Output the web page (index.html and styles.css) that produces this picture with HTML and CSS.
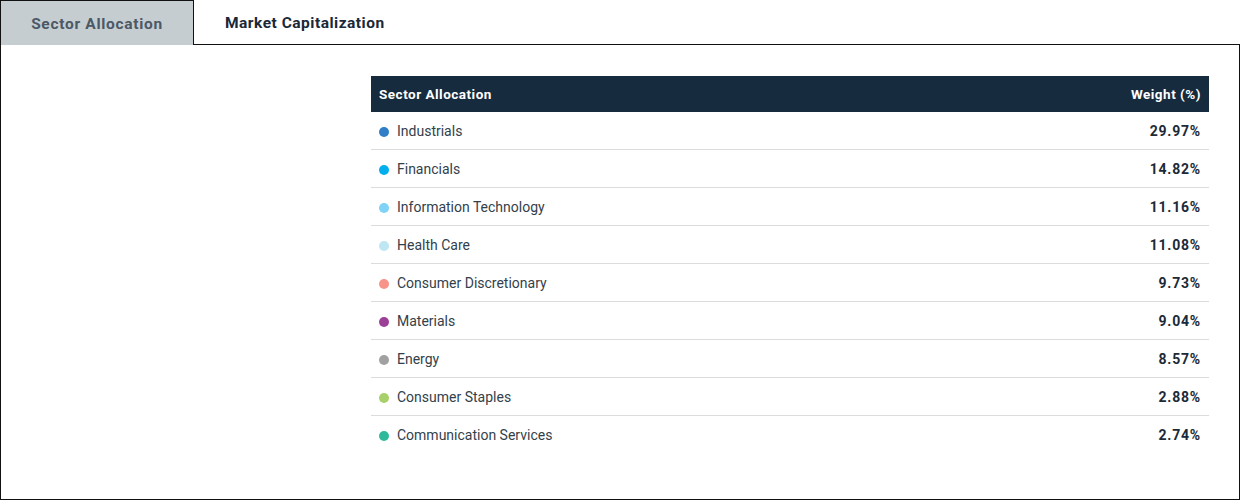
FILE: index.html
```html
<!DOCTYPE html>
<html>
<head>
<meta charset="utf-8">
<link rel="stylesheet" href="styles.css">
</head>
<body>
<div class="tabs">
  <div class="tab active">Sector Allocation</div>
  <div class="tab">Market Capitalization</div>
</div>
<div class="panel">
  <table class="alloc">
    <thead>
      <tr><th class="name">Sector Allocation</th><th class="val">Weight (%)</th></tr>
    </thead>
    <tbody>
      <tr><td class="name"><span class="dot c1"></span>Industrials</td><td class="val">29.97%</td></tr>
      <tr><td class="name"><span class="dot c2"></span>Financials</td><td class="val">14.82%</td></tr>
      <tr><td class="name"><span class="dot c3"></span>Information Technology</td><td class="val">11.16%</td></tr>
      <tr><td class="name"><span class="dot c4"></span>Health Care</td><td class="val">11.08%</td></tr>
      <tr><td class="name"><span class="dot c5"></span>Consumer Discretionary</td><td class="val">9.73%</td></tr>
      <tr><td class="name"><span class="dot c6"></span>Materials</td><td class="val">9.04%</td></tr>
      <tr><td class="name"><span class="dot c7"></span>Energy</td><td class="val">8.57%</td></tr>
      <tr><td class="name"><span class="dot c8"></span>Consumer Staples</td><td class="val">2.88%</td></tr>
      <tr><td class="name"><span class="dot c9"></span>Communication Services</td><td class="val">2.74%</td></tr>
    </tbody>
  </table>
</div>
</body>
</html>
```
FILE: styles.css
```css
html, body {
  margin: 0;
  padding: 0;
  background: #fff;
  font-family: Roboto, "Liberation Sans", Arial, sans-serif;
}
.tabs {
  display: flex;
  height: 45px;
}
.tab {
  box-sizing: border-box;
  height: 45px;
  display: flex;
  align-items: center;
  font-size: 15.5px;
  font-weight: 700;
  letter-spacing: 0.5px;
  color: #1a2838;
  padding: 0 31px;
}
.tab.active {
  width: 194px;
  background: #c6cdd1;
  color: #4b5866;
  border: 1px solid #111;
  border-bottom: none;
  padding: 2px 0 0 0;
  justify-content: center;
  letter-spacing: 0.7px;
}
.panel {
  box-sizing: border-box;
  height: 455px;
  border: 1px solid #111;
  border-top: none;
  display: flex;
  justify-content: flex-end;
  padding: 31px 30px 0 0;
  position: relative;
}
.panel::before {
  content: "";
  position: absolute;
  top: -1px;
  left: 193px;
  right: -1px;
  border-top: 1px solid #111;
}
.alloc {
  width: 838px;
  border-collapse: collapse;
  align-self: flex-start;
  font-size: 14px;
}
.alloc th {
  background: #172b3e;
  color: #fff;
  font-weight: 700;
  height: 36px;
  padding: 0 8px;
  font-size: 13.5px;
  letter-spacing: 0.5px;
}
.alloc td {
  height: 37px;
  padding: 0 8px;
  border-bottom: 1px solid #dcdcdc;
  color: #333f4b;
}
.alloc tbody tr:last-child td {
  border-bottom: none;
}
.name { text-align: left; }
.val { text-align: right; }
.alloc td.val {
  font-weight: 700;
  color: #1c2a38;
  letter-spacing: 0.8px;
}
.dot {
  display: inline-block;
  width: 10px;
  height: 10px;
  border-radius: 50%;
  margin-right: 8px;
  vertical-align: -1px;
}
.c1 { background: #2f7ec6; }
.c2 { background: #03aeef; }
.c3 { background: #7fd3f6; }
.c4 { background: #bee6f3; }
.c5 { background: #f8938a; }
.c6 { background: #9b3f97; }
.c7 { background: #a1a1a1; }
.c8 { background: #a7d06a; }
.c9 { background: #2fb99b; }
```
